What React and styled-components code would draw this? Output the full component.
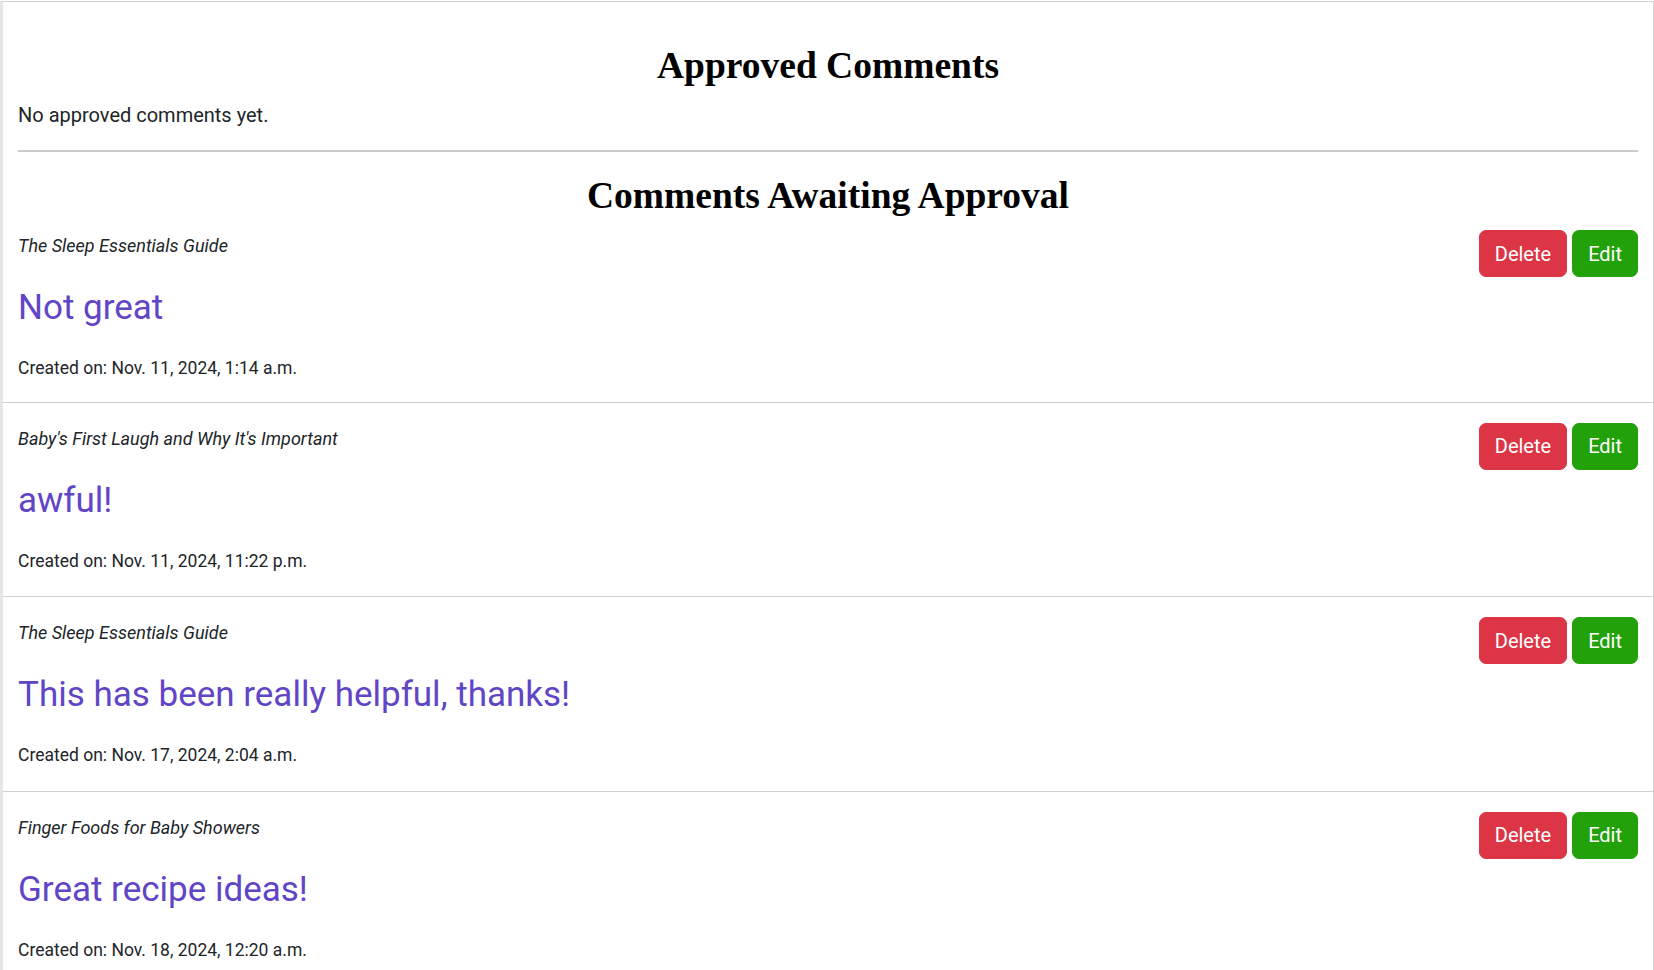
import React from "react";
import styled, { createGlobalStyle } from "styled-components";

const GlobalStyle = createGlobalStyle`
  html, body {
    margin: 0;
    padding: 0;
    background: #ffffff;
  }
  body {
    font-family: Roboto, "Liberation Sans", Arial, sans-serif;
    color: #212529;
    font-size: 20px;
    line-height: 1.5;
  }
  * { box-sizing: border-box; }
`;

const Panel = styled.main`
  margin-top: 1px;
  border-top: 1px solid #d2d2d2;
  border-left: 3px solid #e6e6e6;
  border-right: 1px solid #d4d4d4;
  min-height: 968px;
`;

const Section = styled.section`
  padding: 0 15px 2px;
`;

const Heading = styled.h2`
  margin: ${(p) => p.$top}px 0 0;
  font-family: "Liberation Serif", "Times New Roman", serif;
  font-weight: 700;
  font-size: 37.5px;
  line-height: 24px;
  color: #000;
  text-align: center;
`;

const EmptyNote = styled.p`
  margin: 22px 0 0;
  font-size: 20px;
  line-height: 30px;
`;

const Rule = styled.hr`
  margin: 20px 0 0;
  border: 0;
  border-top: 2px solid #cbcbcb;
  height: 0;
`;

const List = styled.div`
  display: flex;
  flex-direction: column;
`;

const Item = styled.article`
  display: flex;
  align-items: flex-start;
  justify-content: space-between;
  padding: 20px 15px 22.5px;
  border-bottom: 1px solid #cfcfcf;

  &:first-child {
    padding-bottom: 20.5px;
  }
`;

const Body = styled.div`
  display: flex;
  flex-direction: column;
  min-width: 0;
`;

const PostName = styled.p`
  margin: 3px 0 0;
  font-style: italic;
  font-size: 18px;
  line-height: 26px;
  color: #212529;
`;

const CommentTitle = styled.h3`
  margin: 28px 0 0;
  font-weight: 400;
  font-size: 35px;
  line-height: 42px;
  color: #6145c7;
`;

const Created = styled.p`
  margin: 26px 0 0;
  font-size: 17.5px;
  line-height: 26px;
  color: #212529;
`;

const Actions = styled.div`
  display: flex;
  gap: 5px;
  flex-shrink: 0;
`;

const Button = styled.button`
  font-family: Roboto, "Liberation Sans", Arial, sans-serif;
  font-size: 20px;
  line-height: 30px;
  padding: 7.5px 15px;
  border: 1px solid ${(p) => p.$bg};
  border-radius: 7px;
  background: ${(p) => p.$bg};
  color: #fff;
  cursor: pointer;
`;

const comments = [
  {
    post: "The Sleep Essentials Guide",
    title: "Not great",
    created: "Nov. 11, 2024, 1:14 a.m.",
  },
  {
    post: "Baby's First Laugh and Why It's Important",
    title: "awful!",
    created: "Nov. 11, 2024, 11:22 p.m.",
  },
  {
    post: "The Sleep Essentials Guide",
    title: "This has been really helpful, thanks!",
    created: "Nov. 17, 2024, 2:04 a.m.",
  },
  {
    post: "Finger Foods for Baby Showers",
    title: "Great recipe ideas!",
    created: "Nov. 18, 2024, 12:20 a.m.",
  },
];

export default function App() {
  return (
    <>
      <GlobalStyle />
      <Panel>
        <Section>
          <Heading $top={52}>Approved Comments</Heading>
          <EmptyNote>No approved comments yet.</EmptyNote>
          <Rule />
          <Heading $top={32}>Comments Awaiting Approval</Heading>
        </Section>
        <List>
          {comments.map((c, i) => (
            <Item key={i}>
              <Body>
                <PostName>{c.post}</PostName>
                <CommentTitle>{c.title}</CommentTitle>
                <Created>Created on: {c.created}</Created>
              </Body>
              <Actions>
                <Button $bg="#dc3545">Delete</Button>
                <Button $bg="#23a10b">Edit</Button>
              </Actions>
            </Item>
          ))}
        </List>
      </Panel>
    </>
  );
}
